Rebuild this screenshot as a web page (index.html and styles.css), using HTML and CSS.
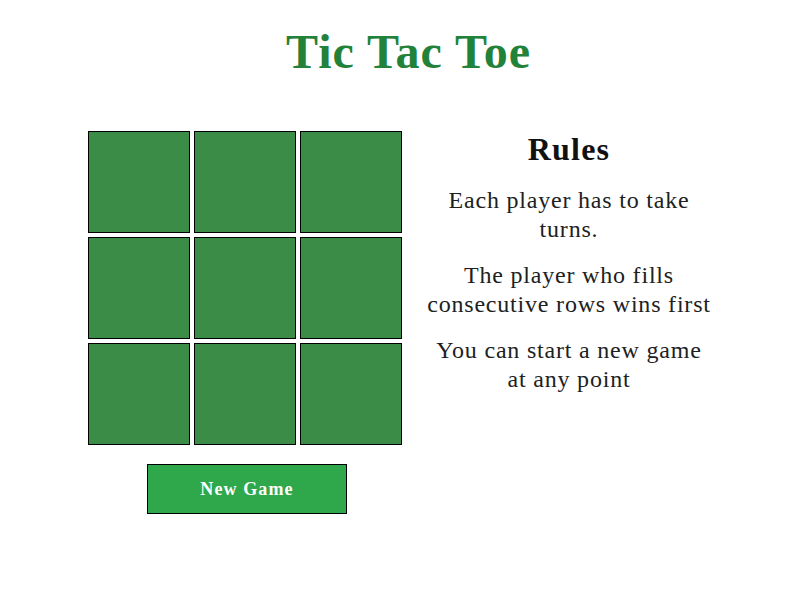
FILE: index.html
```html
<!DOCTYPE html>
<html>
<head>
<meta charset="utf-8">
<link rel="stylesheet" href="styles.css">
</head>
<body>
<h1 class="title">Tic Tac Toe</h1>
<div class="main">
  <div class="game">
    <div class="board">
      <div class="cell"></div><div class="cell"></div><div class="cell"></div>
      <div class="cell"></div><div class="cell"></div><div class="cell"></div>
      <div class="cell"></div><div class="cell"></div><div class="cell"></div>
    </div>
    <button class="new-game">New Game</button>
  </div>
  <div class="rules">
    <h2 class="rules-title">Rules</h2>
    <p class="rule">Each player has to take turns.</p>
    <p class="rule">The player who fills consecutive rows wins first</p>
    <p class="rule">You can start a new game at any point</p>
  </div>
</div>
</body>
</html>
```
FILE: styles.css
```css
html, body {
  margin: 0;
  padding: 0;
  background: #ffffff;
  font-family: "Liberation Serif", "Times New Roman", serif;
}
.title {
  margin: 24px 0 0;
  padding-left: 9px;
  text-align: center;
  font-size: 48px;
  font-weight: bold;
  letter-spacing: 1px;
  color: #23823a;
}
.main {
  display: flex;
  align-items: flex-start;
  gap: 23px;
  padding-left: 88px;
  margin-top: 52px;
}
.game {
  display: flex;
  flex-direction: column;
  align-items: flex-start;
}
.board {
  display: grid;
  grid-template-columns: repeat(3, 102px);
  grid-template-rows: repeat(3, 102px);
  gap: 4px;
}
.cell {
  box-sizing: border-box;
  background: #3a8c47;
  border: 1px solid #000;
}
.new-game {
  box-sizing: border-box;
  margin: 19px 0 0 59px;
  width: 200px;
  height: 50px;
  background: #2ea84b;
  border: 1px solid #000;
  color: #fff;
  font-family: "Liberation Serif", "Times New Roman", serif;
  font-weight: bold;
  font-size: 18px;
  letter-spacing: 1.1px;
  padding: 0;
}
.rules {
  width: 288px;
  text-align: center;
  color: #1c2222;
}
.rules-title {
  margin: 0 0 18px;
  font-size: 32px;
  font-weight: bold;
  letter-spacing: 1.2px;
  color: #111;
}
.rule {
  margin: 0 0 17px;
  font-size: 24px;
  line-height: 29px;
  letter-spacing: 0.8px;
}
```
